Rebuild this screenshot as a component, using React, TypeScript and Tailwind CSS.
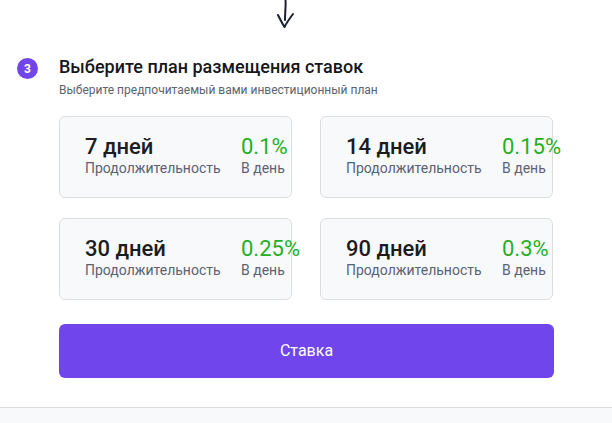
import React from "react";

const plans = [
  { days: "7 дней", rate: "0.1%" },
  { days: "14 дней", rate: "0.15%" },
  { days: "30 дней", rate: "0.25%" },
  { days: "90 дней", rate: "0.3%" },
];

const PlanCard = ({ days, rate }: { days: string; rate: string }) => (
  <div className="h-[82px] rounded-md border border-[#dcdde0] bg-[#f8f9fb] pl-[25px] pt-[17px] flex">
    <div className="w-[156px] shrink-0">
      <div className="text-[22px] leading-[26px] font-medium text-[#1c1d21]">{days}</div>
      <div className="text-[14px] leading-[18px] text-[#5b6272] mt-[-1px]">Продолжительность</div>
    </div>
    <div className="whitespace-nowrap shrink-0">
      <div className="text-[22px] leading-[26px] text-[#1fb01f]">{rate}</div>
      <div className="text-[14px] leading-[18px] text-[#5b6272] mt-[-1px]">В день</div>
    </div>
  </div>
);

export default function App() {
  return (
    <div className="w-[612px] h-[423px] bg-white flex flex-col overflow-hidden" style={{ fontFamily: "Roboto, 'Noto Sans', sans-serif" }}>
      <div className="h-[408px] border-b border-[#dcdde0] flex flex-col">
        <div className="h-[30px] flex">
          <svg width="24" height="30" viewBox="0 0 24 30" className="ml-[273px]">
            <path d="M12.5 0 C13 6 12 12 12 20" stroke="#1c2035" strokeWidth="2" fill="none" strokeLinecap="round" />
            <path d="M5 15 C7 19 9 23 11.5 27 C14 22 17 18 20 14" stroke="#1c2035" strokeWidth="2" fill="none" strokeLinecap="round" strokeLinejoin="round" />
          </svg>
        </div>
        <div className="flex mt-[25px] pl-[17px]">
          <div className="w-[21px] h-[21px] rounded-full bg-[#7045ec] text-white text-[12px] font-bold flex items-center justify-center mt-[3px]">3</div>
          <div className="ml-[21px]">
            <div className="text-[18px] leading-[24px] font-medium text-[#16171b]">Выберите план размещения ставок</div>
            <div className="text-[12px] leading-[14px] text-[#5b6272] mt-[4px]">Выберите предпочитаемый вами инвестиционный план</div>
          </div>
        </div>
        <div className="grid grid-cols-2 gap-x-[28px] gap-y-[20px] ml-[59px] w-[494px] mt-[19px]">
          {plans.map((p) => (
            <PlanCard key={p.days} days={p.days} rate={p.rate} />
          ))}
        </div>
        <button className="ml-[59px] w-[495px] h-[54px] mt-[24px] rounded-md bg-[#7045ec] text-white text-[16px]">Ставка</button>
      </div>
      <div className="flex-1 bg-[#f8f9fb]" />
    </div>
  );
}
